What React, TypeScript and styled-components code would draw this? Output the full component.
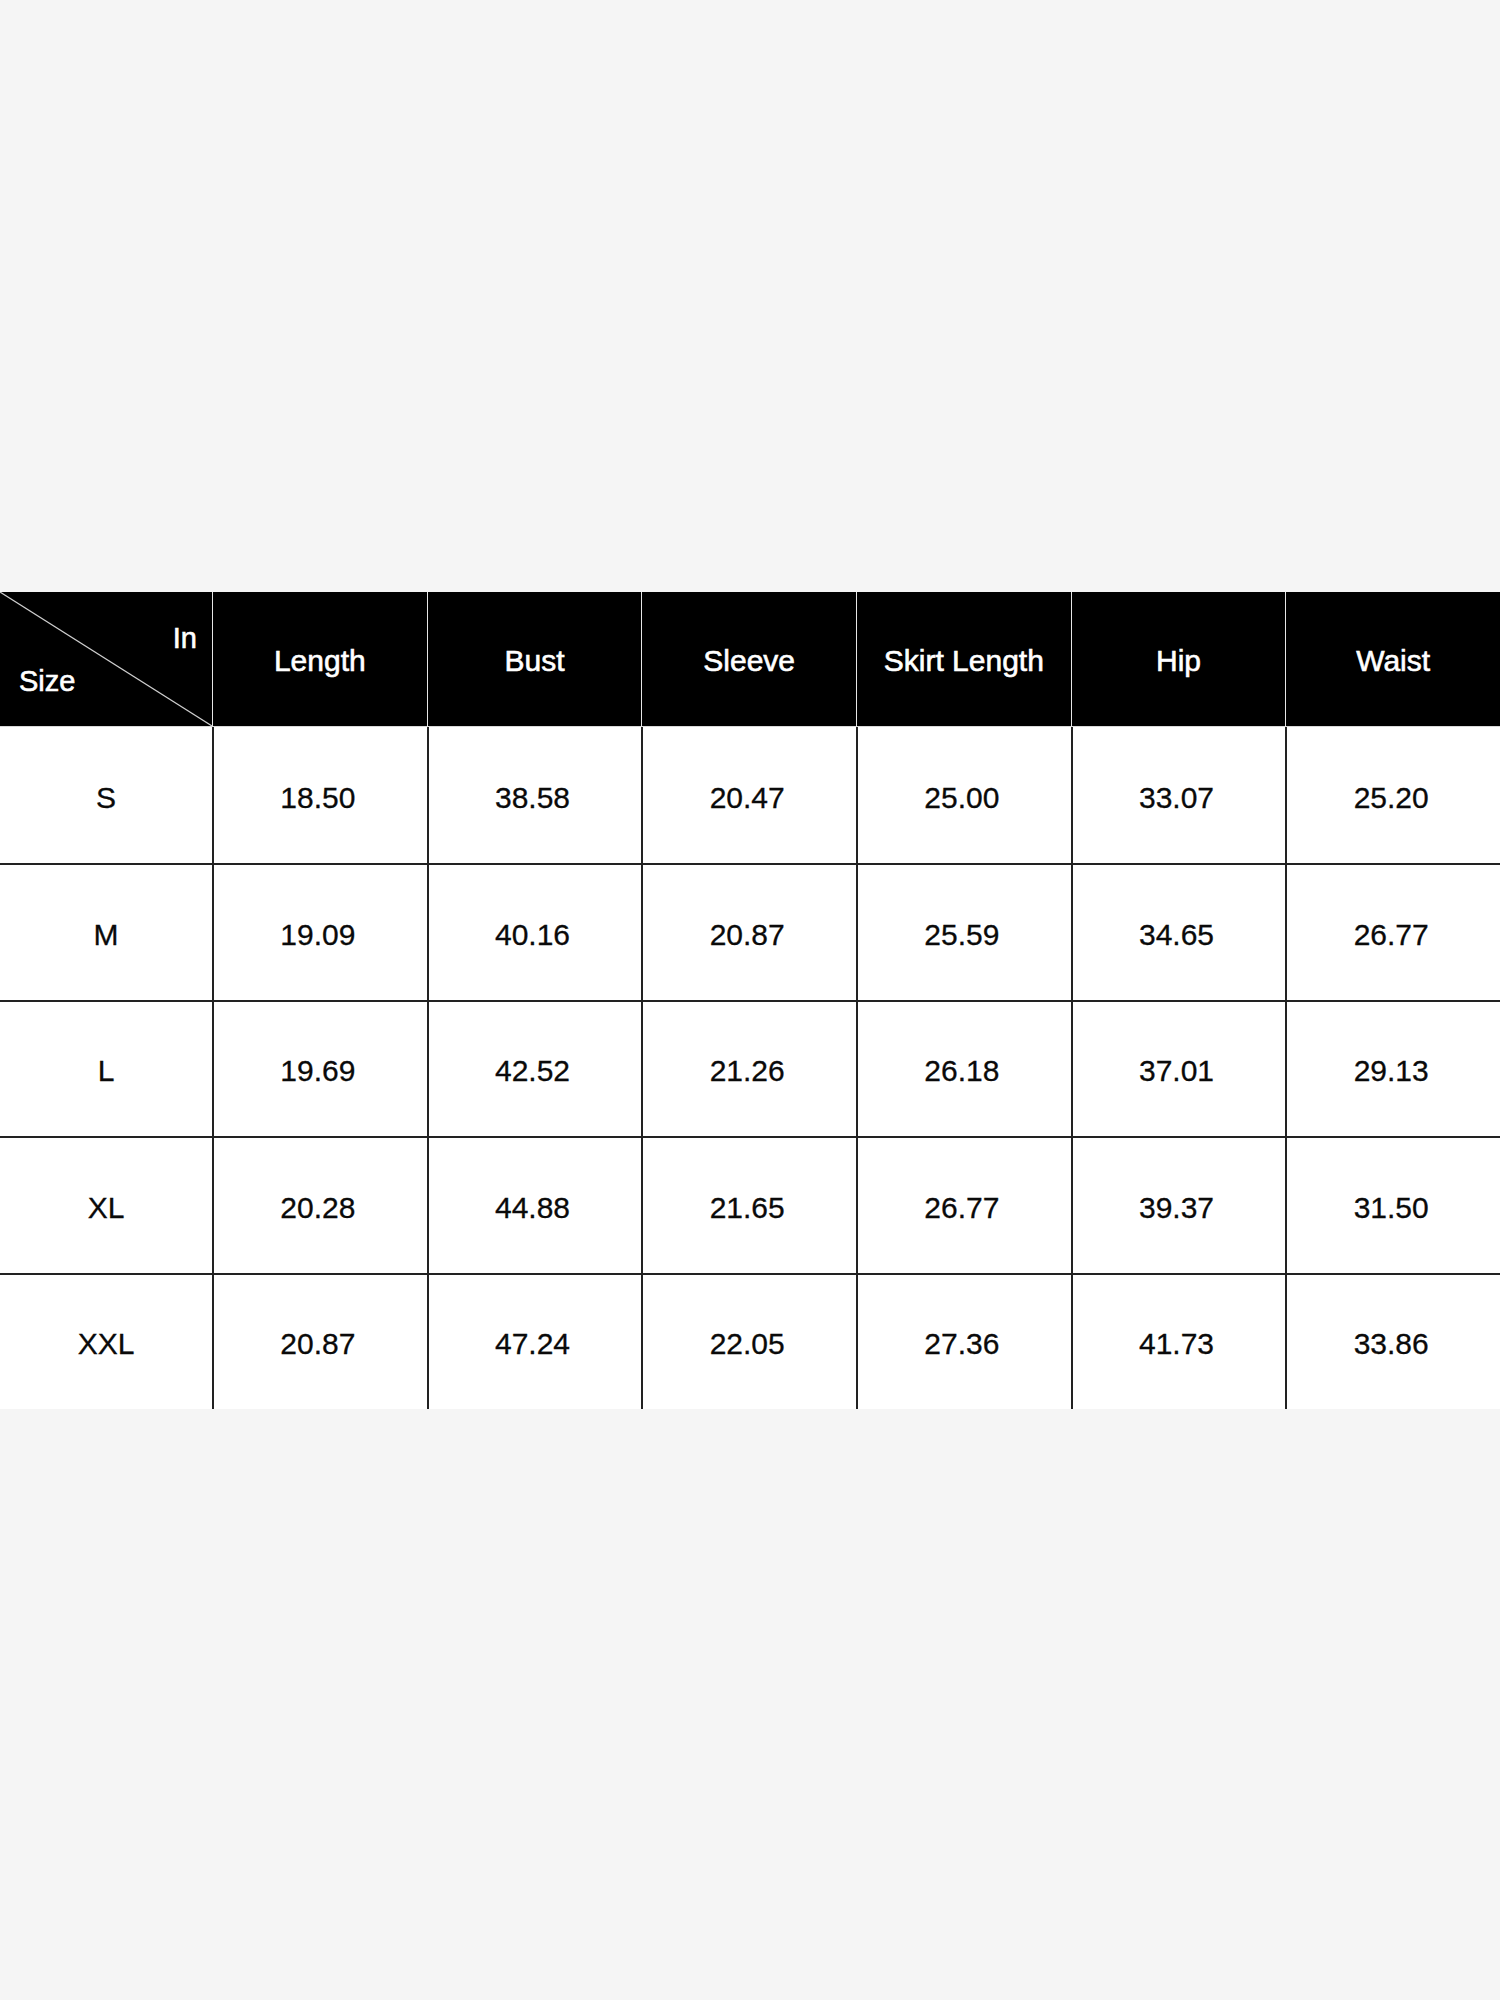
import React from "react";
import styled, { createGlobalStyle } from "styled-components";

const GlobalStyle = createGlobalStyle`
  html, body {
    margin: 0;
    padding: 0;
    background: #f5f5f5;
  }
  body {
    font-family: "Liberation Sans", Arial, Helvetica, sans-serif;
  }
`;

const Page = styled.div`
  width: 1500px;
  min-height: 2000px;
  padding-top: 592px;
  box-sizing: border-box;
`;

const Table = styled.div`
  display: grid;
  grid-template-columns: 212px repeat(6, 1fr);
  grid-template-rows: 135px repeat(5, 136.4px);
  width: 1500px;
  background: #ffffff;
`;

const HeadCell = styled.div<{ $first?: boolean }>`
  position: relative;
  background: #000000;
  color: #ffffff;
  display: flex;
  align-items: center;
  justify-content: center;
  font-size: 30px;
  -webkit-text-stroke: 0.6px #ffffff;
  padding-top: 4px;
  box-sizing: border-box;
  border-left: ${(p) => (p.$first ? "none" : "1.5px solid #e6e6e6")};
  border-bottom: 1px solid #d8d8d8;
`;

const CornerLabel = styled.span<{ $pos: "top" | "bottom" }>`
  position: absolute;
  font-size: 29px;
  line-height: 1;
  ${(p) =>
    p.$pos === "top"
      ? "top: 32px; right: 15px;"
      : "top: 75px; left: 19px;"}
`;

const Diagonal = styled.svg`
  position: absolute;
  inset: 0;
  width: 100%;
  height: 100%;
`;

const BodyCell = styled.div<{ $first?: boolean; $topRow?: boolean }>`
  display: flex;
  align-items: center;
  justify-content: center;
  font-size: 30px;
  color: #0a0a0a;
  -webkit-text-stroke: 0.3px #0a0a0a;
  padding-top: 5px;
  padding-right: ${(p) => (p.$first ? "0" : "5px")};
  box-sizing: border-box;
  border-left: ${(p) => (p.$first ? "none" : "2px solid #222222")};
  border-top: ${(p) => (p.$topRow ? "none" : "2px solid #222222")};
`;

const columns = ["Length", "Bust", "Sleeve", "Skirt Length", "Hip", "Waist"];

const rows: [string, string[]][] = [
  ["S", ["18.50", "38.58", "20.47", "25.00", "33.07", "25.20"]],
  ["M", ["19.09", "40.16", "20.87", "25.59", "34.65", "26.77"]],
  ["L", ["19.69", "42.52", "21.26", "26.18", "37.01", "29.13"]],
  ["XL", ["20.28", "44.88", "21.65", "26.77", "39.37", "31.50"]],
  ["XXL", ["20.87", "47.24", "22.05", "27.36", "41.73", "33.86"]],
];

export default function App() {
  return (
    <>
      <GlobalStyle />
      <Page>
        <Table>
          <HeadCell $first>
            <Diagonal viewBox="0 0 212 135" preserveAspectRatio="none">
              <line x1="0" y1="0" x2="212" y2="135" stroke="#cfcfcf" strokeWidth="1.2" />
            </Diagonal>
            <CornerLabel $pos="top">In</CornerLabel>
            <CornerLabel $pos="bottom">Size</CornerLabel>
          </HeadCell>
          {columns.map((c) => (
            <HeadCell key={c}>{c}</HeadCell>
          ))}
          {rows.map(([size, vals], ri) => (
            <React.Fragment key={size}>
              <BodyCell $first $topRow={ri === 0}>
                {size}
              </BodyCell>
              {vals.map((v, ci) => (
                <BodyCell key={ci} $topRow={ri === 0}>
                  {v}
                </BodyCell>
              ))}
            </React.Fragment>
          ))}
        </Table>
      </Page>
    </>
  );
}
